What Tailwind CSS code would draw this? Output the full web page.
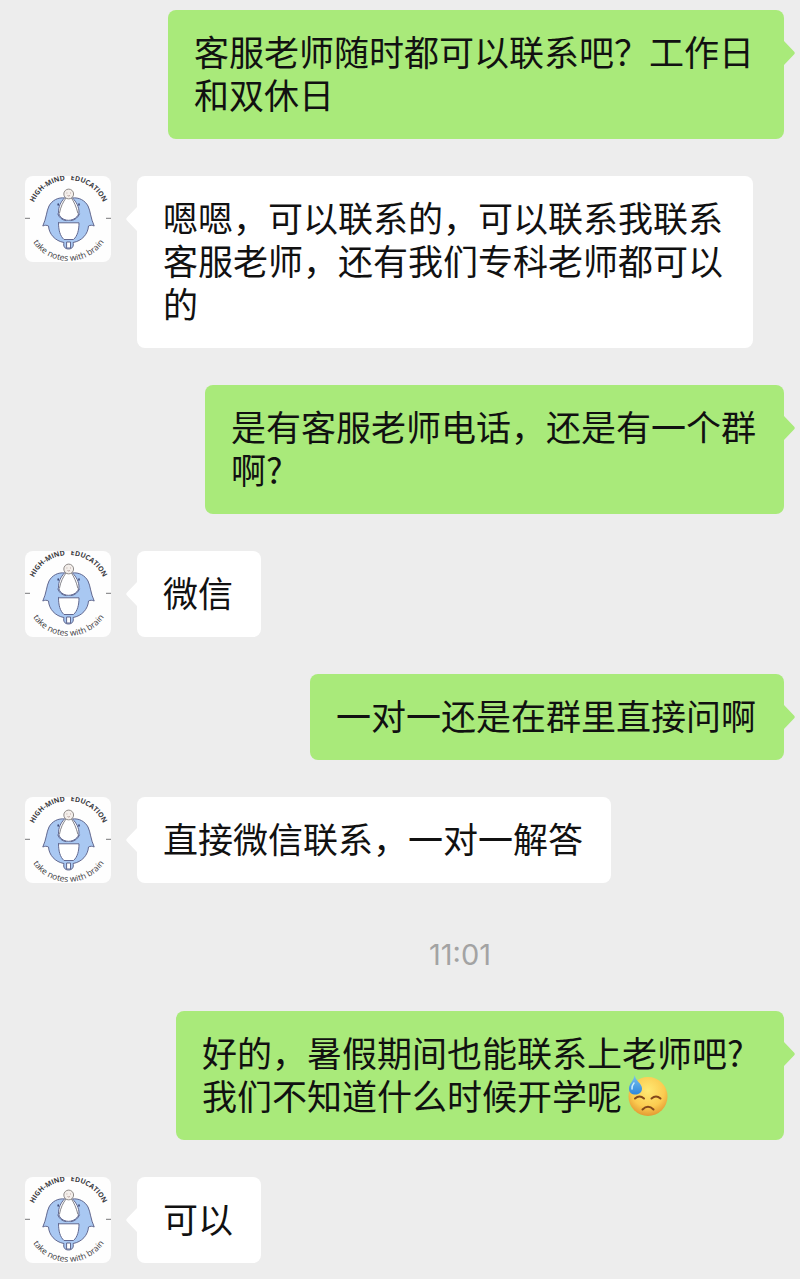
<!DOCTYPE html>
<html lang="zh-CN">

<head>
  <meta charset="UTF-8" />
  <meta name="viewport" content="width=device-width, initial-scale=1" />
  <title>聊天</title>
  <script src="https://cdn.jsdelivr.net/npm/@tailwindcss/browser@4"></script>
</head>

<body class="bg-[#ededed] font-['Noto_Sans_CJK_SC',sans-serif] text-[35px] leading-[43px] text-[#111111]">
  <!-- shared shapes -->
  <svg class="hidden" xmlns="http://www.w3.org/2000/svg">
    <defs>
      <path id="arcTop" d="M5.500 42a38 38 0 0 1 76 0" />
      <path id="arcBottom" d="M0.500 42a43 43 0 0 0 86 0" />
    </defs>
    <symbol id="logo" viewBox="0 0 86 86">
      <rect width="86" height="86" fill="#fefefe" />
      <g fill="#3c3c42" font-family="Open Sans, sans-serif">
        <text font-size="7" font-weight="700" text-anchor="middle"><textPath href="#arcTop" startOffset="50%">HIGH-MIND&#160;&#160;&#160;EDUCATION</textPath></text>
        <text font-size="8.500" font-weight="500" text-anchor="middle"><textPath href="#arcBottom" startOffset="50%">take notes with brain</textPath></text>
      </g>
      <path d="M0 42.300h5M81 42.300h5" stroke="#77777a" />
      <g stroke="#62688f" stroke-linejoin="round" stroke-linecap="round">
        <path fill="#a9c8f2" d="M39.500 22C33 21 27 24.500 24 30C21.500 35 21.500 42 17.800 50C20 49 21.500 49 23.500 50C24 58 30 65 39 66.500C38 70 39.500 73 43.500 73C47.500 73 49 70 48 66.500C57 65 63 58 63.500 50C65.500 49 67 49 69.200 50C65.500 42 65.500 35 63 30C60 24.500 54 21 47.500 22Z" />
        <path fill="#fff" d="M39.500 22C35.500 26 33.500 31 33.500 36C34 41 38.500 44.300 43.500 44.300C48.500 44.300 53.500 41 54 36C54 31 51.500 26 47.500 22Z" />
        <path fill="none" d="M32.800 38Q35 43.800 41 44.600M54.500 38Q52 43.800 46 44.600" />
        <path fill="none" stroke="#85858c" d="M41 22C38 26 35.500 31 34.500 37M46.500 22C49 26 51.500 31 52.800 37" />
        <path fill="#fff" d="M33.500 46.800H54C54 54 52.500 60 48.500 63.500H39C35 60 33.500 54 33.500 46.800Z" />
        <path fill="#fff" d="M42 66h3.500v6h-3.500z" />
        <path stroke="#38426f" stroke-width="1.500" d="M33.200 28v1M54 28v1" />
      </g>
      <circle cx="43.700" cy="18" r="4.900" fill="#f3eeea" stroke="#85807e" stroke-width=".9" />
      <path d="M41.500 17h.8M45.200 17h.8M42.500 19.500q1.200 1 2.400 0" fill="none" stroke="#a48884" stroke-width=".8" />
    </symbol>
    <symbol id="tail" viewBox="0 0 11 24">
      <path d="M11 0v24L1 13.500Q-.5 12 1 10.500Z" fill="currentColor" />
    </symbol>
  </svg>

  <main class="flex flex-col gap-[37px] pt-[10px] pb-4 pl-[25px] pr-[5px]">
    <div class="flex items-start justify-end">
      <p class="w-[616px] rounded-lg bg-[#a9ea7a] pt-[19px] pr-[28px] pb-[24px] pl-[26px]">客服老师随时都可以联系吧？工作日<br>和双休日</p>
      <svg class="mt-[31px] h-6 w-[11px] shrink-0 -scale-x-100 text-[#a9ea7a]"><use href="#tail" /></svg>
    </div>

    <div class="flex items-start">
      <svg class="size-[86px] shrink-0 rounded-lg" role="img" aria-label="High-Mind Education"><use href="#logo" /></svg>
      <svg class="mt-[31px] ml-[15px] h-6 w-[11px] shrink-0 text-white"><use href="#tail" /></svg>
      <p class="w-[616px] rounded-lg bg-white pt-[19px] pr-[28px] pb-[24px] pl-[26px]">嗯嗯，可以联系的，可以联系我联系<br>客服老师，还有我们专科老师都可以<br>的</p>
    </div>

    <div class="flex items-start justify-end">
      <p class="rounded-lg bg-[#a9ea7a] pt-[19px] pr-[28px] pb-[24px] pl-[26px]">是有客服老师电话，还是有一个群<br>啊?</p>
      <svg class="mt-[31px] h-6 w-[11px] shrink-0 -scale-x-100 text-[#a9ea7a]"><use href="#tail" /></svg>
    </div>

    <div class="flex items-start">
      <svg class="size-[86px] shrink-0 rounded-lg" role="img" aria-label="High-Mind Education"><use href="#logo" /></svg>
      <svg class="mt-[31px] ml-[15px] h-6 w-[11px] shrink-0 text-white"><use href="#tail" /></svg>
      <p class="rounded-lg bg-white pt-[19px] pr-[28px] pb-[24px] pl-[26px]">微信</p>
    </div>

    <div class="flex items-start justify-end">
      <p class="rounded-lg bg-[#a9ea7a] pt-[19px] pr-[28px] pb-[24px] pl-[26px]">一对一还是在群里直接问啊</p>
      <svg class="mt-[31px] h-6 w-[11px] shrink-0 -scale-x-100 text-[#a9ea7a]"><use href="#tail" /></svg>
    </div>

    <div class="flex items-start">
      <svg class="size-[86px] shrink-0 rounded-lg" role="img" aria-label="High-Mind Education"><use href="#logo" /></svg>
      <svg class="mt-[31px] ml-[15px] h-6 w-[11px] shrink-0 text-white"><use href="#tail" /></svg>
      <p class="rounded-lg bg-white pt-[19px] pr-[28px] pb-[24px] pl-[26px]">直接微信联系，一对一解答</p>
    </div>

    <time class="block pt-4 pl-[100px] text-center font-[Inter,sans-serif] text-[29px] leading-[38px] text-[#a3a3a3]">11:01</time>

    <div class="flex items-start justify-end">
      <p class="w-[608px] rounded-lg bg-[#a9ea7a] pt-[19px] pr-[28px] pb-[24px] pl-[26px]">好的，暑假期间也能联系上老师吧?<br><span class="flex items-center">我们不知道什么时候开学呢<svg class="ml-1 size-[42px] shrink-0" viewBox="0 0 42 42" role="img" aria-label="汗">
            <defs>
              <radialGradient id="face" cx=".5" cy=".35" r=".65">
                <stop offset="0" stop-color="#ffe974" />
                <stop offset=".65" stop-color="#fbcb50" />
                <stop offset="1" stop-color="#e39a33" />
              </radialGradient>
              <linearGradient id="drop" x2="0" y2="1">
                <stop offset="0" stop-color="#7cc4ee" />
                <stop offset="1" stop-color="#2f87dc" />
              </linearGradient>
            </defs>
            <circle cx="22" cy="22.500" r="19.500" fill="url(#face)" />
            <g fill="none" stroke="#84491b" stroke-width="2" stroke-linecap="round">
              <path d="M9 24.500q4.500 -4 9 0" />
              <path d="M25.500 24.500q4.500 -4 9 0" />
              <path d="M16.500 35.500q5.500 -5.500 11 0" />
            </g>
            <path d="M8.500 1C8 7 3 9.500 3 14.500C3 18.500 5.500 20.500 9.500 20.500C13.500 20.500 16 18 16 14.500C16 9.500 9.500 7 8.500 1Z" fill="url(#drop)" />
            <path d="M8 9Q5.500 12 6 15" fill="none" stroke="#c9ecff" stroke-width="1.500" stroke-linecap="round" />
          </svg></span></p>
      <svg class="mt-[31px] h-6 w-[11px] shrink-0 -scale-x-100 text-[#a9ea7a]"><use href="#tail" /></svg>
    </div>

    <div class="flex items-start">
      <svg class="size-[86px] shrink-0 rounded-lg" role="img" aria-label="High-Mind Education"><use href="#logo" /></svg>
      <svg class="mt-[31px] ml-[15px] h-6 w-[11px] shrink-0 text-white"><use href="#tail" /></svg>
      <p class="rounded-lg bg-white pt-[19px] pr-[28px] pb-[24px] pl-[26px]">可以</p>
    </div>
  </main>
</body>

</html>
